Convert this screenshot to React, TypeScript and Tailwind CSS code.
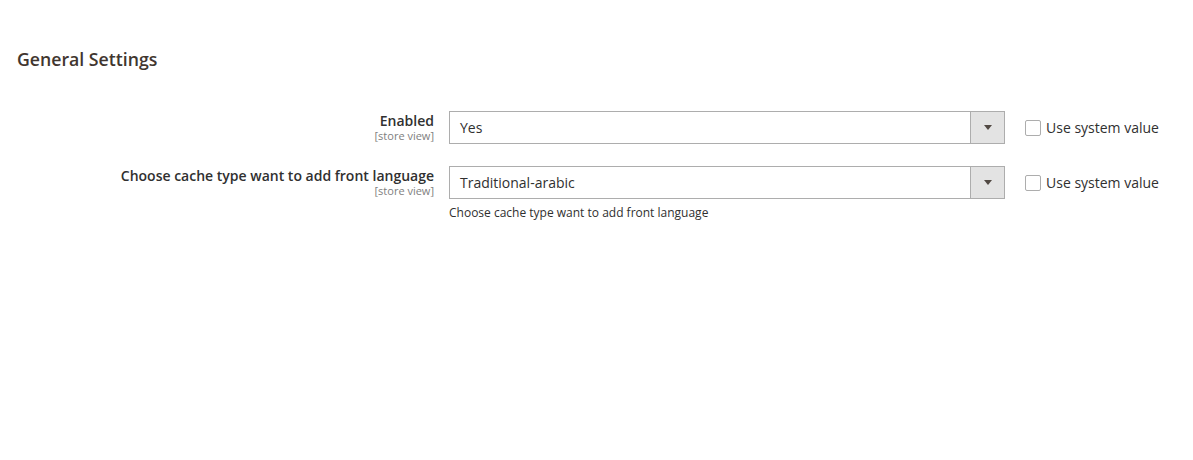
import React from "react";

function Row({ label, value, note }: { label: string; value: string; note?: string }) {
  return (
    <div className="flex items-start">
      <div className="w-[434px] shrink-0 text-right pt-[1px] pr-0">
        <div className="text-[14px] leading-[18px] font-semibold text-[#303030]">{label}</div>
        <div className="text-[11px] leading-[12px] text-[#808080]">[store view]</div>
      </div>
      <div className="ml-[15px] w-[556px] shrink-0">
        <div className="flex h-[33px] border border-[#adadad] bg-white">
          <div className="flex-1 pl-[10px] flex items-center text-[14px] text-[#303030]">{value}</div>
          <div className="w-[34px] border-l border-[#adadad] bg-[#e3e3e3] flex items-center justify-center">
            <svg width="8" height="5" viewBox="0 0 8 5"><path d="M0 0h8L4 5z" fill="#514943" /></svg>
          </div>
        </div>
        {note && <div className="mt-[6px] text-[12px] leading-[16px] text-[#303030]">{note}</div>}
      </div>
      <label className="ml-[20px] flex items-center h-[33px] gap-[5px] text-[14px] text-[#303030]">
        <span className="w-[16px] h-[16px] border border-[#adadad] rounded-[2px] bg-white" />
        <span>Use system value</span>
      </label>
    </div>
  );
}

export default function App() {
  return (
    <div className="w-[1193px] h-[460px] bg-white" style={{ fontFamily: '"Open Sans", sans-serif' }}>
      <div className="pt-[47px] pl-[17px]">
        <h2 className="text-[17.7px] leading-[24px] font-semibold text-[#41362f]">General Settings</h2>
      </div>
      <div className="mt-[40px] flex flex-col gap-[22px]">
        <Row label="Enabled" value="Yes" />
        <Row label="Choose cache type want to add front language" value="Traditional-arabic" note="Choose cache type want to add front language" />
      </div>
    </div>
  );
}
